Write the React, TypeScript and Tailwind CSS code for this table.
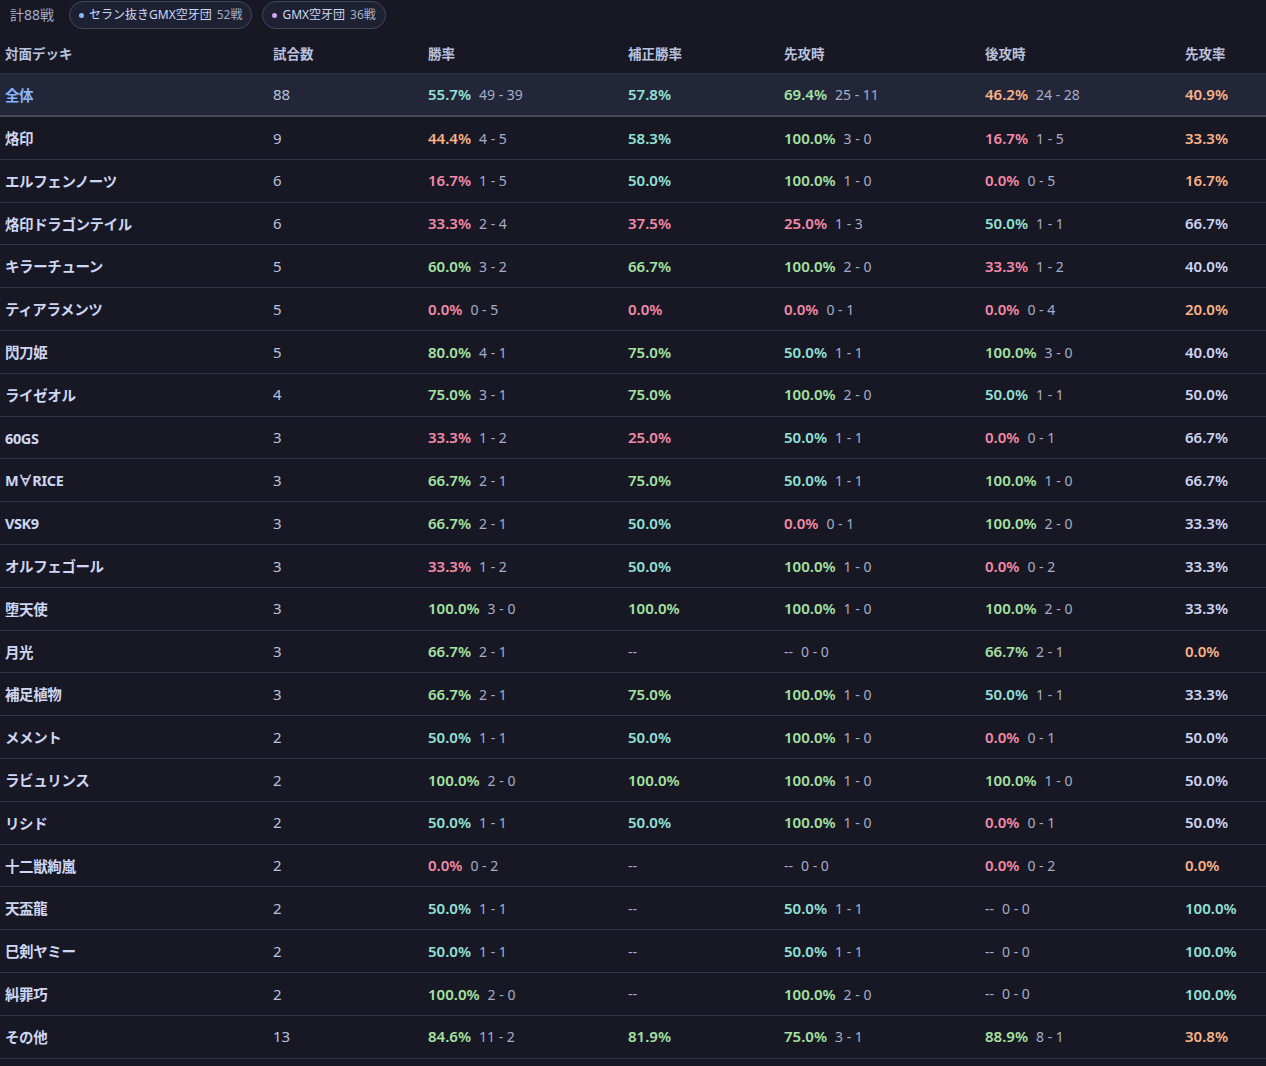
import clsx from 'clsx';

type Tone = 'green' | 'teal' | 'peach' | 'red' | 'plain';

type Row = {
  name: string;
  games: number;
  wr: number;
  rec: string;
  adj: number | null;
  first: number | null;
  firstRec: string;
  second: number | null;
  secondRec: string;
  firstRate: number;
  rateTone: Tone;
};

const total: Row = {
  name: '全体',
  games: 88,
  wr: 55.7,
  rec: '49 - 39',
  adj: 57.8,
  first: 69.4,
  firstRec: '25 - 11',
  second: 46.2,
  secondRec: '24 - 28',
  firstRate: 40.9,
  rateTone: 'peach',
};

const rows: Row[] = [
  { name: '烙印', games: 9, wr: 44.4, rec: '4 - 5', adj: 58.3, first: 100, firstRec: '3 - 0', second: 16.7, secondRec: '1 - 5', firstRate: 33.3, rateTone: 'peach' },
  { name: 'エルフェンノーツ', games: 6, wr: 16.7, rec: '1 - 5', adj: 50, first: 100, firstRec: '1 - 0', second: 0, secondRec: '0 - 5', firstRate: 16.7, rateTone: 'peach' },
  { name: '烙印ドラゴンテイル', games: 6, wr: 33.3, rec: '2 - 4', adj: 37.5, first: 25, firstRec: '1 - 3', second: 50, secondRec: '1 - 1', firstRate: 66.7, rateTone: 'plain' },
  { name: 'キラーチューン', games: 5, wr: 60, rec: '3 - 2', adj: 66.7, first: 100, firstRec: '2 - 0', second: 33.3, secondRec: '1 - 2', firstRate: 40, rateTone: 'plain' },
  { name: 'ティアラメンツ', games: 5, wr: 0, rec: '0 - 5', adj: 0, first: 0, firstRec: '0 - 1', second: 0, secondRec: '0 - 4', firstRate: 20, rateTone: 'peach' },
  { name: '閃刀姫', games: 5, wr: 80, rec: '4 - 1', adj: 75, first: 50, firstRec: '1 - 1', second: 100, secondRec: '3 - 0', firstRate: 40, rateTone: 'plain' },
  { name: 'ライゼオル', games: 4, wr: 75, rec: '3 - 1', adj: 75, first: 100, firstRec: '2 - 0', second: 50, secondRec: '1 - 1', firstRate: 50, rateTone: 'plain' },
  { name: '60GS', games: 3, wr: 33.3, rec: '1 - 2', adj: 25, first: 50, firstRec: '1 - 1', second: 0, secondRec: '0 - 1', firstRate: 66.7, rateTone: 'plain' },
  { name: 'M∀RICE', games: 3, wr: 66.7, rec: '2 - 1', adj: 75, first: 50, firstRec: '1 - 1', second: 100, secondRec: '1 - 0', firstRate: 66.7, rateTone: 'plain' },
  { name: 'VSK9', games: 3, wr: 66.7, rec: '2 - 1', adj: 50, first: 0, firstRec: '0 - 1', second: 100, secondRec: '2 - 0', firstRate: 33.3, rateTone: 'plain' },
  { name: 'オルフェゴール', games: 3, wr: 33.3, rec: '1 - 2', adj: 50, first: 100, firstRec: '1 - 0', second: 0, secondRec: '0 - 2', firstRate: 33.3, rateTone: 'plain' },
  { name: '堕天使', games: 3, wr: 100, rec: '3 - 0', adj: 100, first: 100, firstRec: '1 - 0', second: 100, secondRec: '2 - 0', firstRate: 33.3, rateTone: 'plain' },
  { name: '月光', games: 3, wr: 66.7, rec: '2 - 1', adj: null, first: null, firstRec: '0 - 0', second: 66.7, secondRec: '2 - 1', firstRate: 0, rateTone: 'peach' },
  { name: '補足植物', games: 3, wr: 66.7, rec: '2 - 1', adj: 75, first: 100, firstRec: '1 - 0', second: 50, secondRec: '1 - 1', firstRate: 33.3, rateTone: 'plain' },
  { name: 'メメント', games: 2, wr: 50, rec: '1 - 1', adj: 50, first: 100, firstRec: '1 - 0', second: 0, secondRec: '0 - 1', firstRate: 50, rateTone: 'plain' },
  { name: 'ラビュリンス', games: 2, wr: 100, rec: '2 - 0', adj: 100, first: 100, firstRec: '1 - 0', second: 100, secondRec: '1 - 0', firstRate: 50, rateTone: 'plain' },
  { name: 'リシド', games: 2, wr: 50, rec: '1 - 1', adj: 50, first: 100, firstRec: '1 - 0', second: 0, secondRec: '0 - 1', firstRate: 50, rateTone: 'plain' },
  { name: '十二獣絢嵐', games: 2, wr: 0, rec: '0 - 2', adj: null, first: null, firstRec: '0 - 0', second: 0, secondRec: '0 - 2', firstRate: 0, rateTone: 'peach' },
  { name: '天盃龍', games: 2, wr: 50, rec: '1 - 1', adj: null, first: 50, firstRec: '1 - 1', second: null, secondRec: '0 - 0', firstRate: 100, rateTone: 'teal' },
  { name: '巳剣ヤミー', games: 2, wr: 50, rec: '1 - 1', adj: null, first: 50, firstRec: '1 - 1', second: null, secondRec: '0 - 0', firstRate: 100, rateTone: 'teal' },
  { name: '糾罪巧', games: 2, wr: 100, rec: '2 - 0', adj: null, first: 100, firstRec: '2 - 0', second: null, secondRec: '0 - 0', firstRate: 100, rateTone: 'teal' },
  { name: 'その他', games: 13, wr: 84.6, rec: '11 - 2', adj: 81.9, first: 75, firstRec: '3 - 1', second: 88.9, secondRec: '8 - 1', firstRate: 30.8, rateTone: 'peach' },
];

const toneClass: Record<Tone, string> = {
  green: 'text-[#a6e3a1]',
  teal: 'text-[#94e2d5]',
  peach: 'text-[#fab387]',
  red: 'text-[#f38ba8]',
  plain: 'text-[#cdd6f4]',
};

// win rate colour bands
const rateTone = (v: number): Tone => {
  if (v >= 60) return 'green';
  if (v >= 50) return 'teal';
  if (v >= 40) return 'peach';
  return 'red';
};

const cols =
  'grid grid-cols-[268px_155px_200px_156px_201px_200px_1fr] [&>div]:px-[5px]';

function Pct({ value, tone }: { value: number | null; tone?: Tone }) {
  if (value === null) {
    return <span className="text-[#a6adc8]">--</span>;
  }
  return (
    <span className={clsx('text-[15px] font-semibold', toneClass[tone ?? rateTone(value)])}>
      {value.toFixed(1)}%
    </span>
  );
}

function WithRecord({ value, rec }: { value: number | null; rec: string }) {
  return (
    <div className="flex items-baseline gap-[8px]">
      <Pct value={value} />
      <span className="text-[14px] text-[#a6adc8]">{rec}</span>
    </div>
  );
}

function StatRow({ row, isTotal }: { row: Row; isTotal?: boolean }) {
  return (
    <div
      className={clsx(
        cols,
        'items-center',
        isTotal
          ? 'h-[43px] border-b-2 border-[#45475a] bg-[#222638] pt-[1px]'
          : 'h-[42.8px] border-b border-[#313244] pt-[1px]'
      )}
    >
      <div
        className={clsx(
          'font-bold text-[14.5px] tracking-[-0.4px]',
          isTotal ? 'text-[#89b4fa]' : 'text-[#cdd6f4]'
        )}
      >
        {row.name}
      </div>
      <div className="text-[15px] text-[#bac2de]">{row.games}</div>
      <div>
        <WithRecord value={row.wr} rec={row.rec} />
      </div>
      <div>
        <Pct value={row.adj} />
      </div>
      <div>
        <WithRecord value={row.first} rec={row.firstRec} />
      </div>
      <div>
        <WithRecord value={row.second} rec={row.secondRec} />
      </div>
      <div>
        <Pct value={row.firstRate} tone={row.rateTone} />
      </div>
    </div>
  );
}

export default function App() {
  return (
    <div
      className="min-h-screen w-[1266px] bg-[#181825] text-sm text-[#cdd6f4]"
      style={{ fontFamily: '"Noto Sans", "Noto Sans CJK JP", sans-serif' }}
    >
      <div className="flex h-[30px] items-center gap-[15px] pl-[10px]">
        <span className="text-[14px] text-[#a6adc8]">計88戦</span>
        <div className="flex gap-[10px]">
          <span className="flex h-[28px] items-center gap-[5px] rounded-full border border-[#45475a] bg-[#1e2132] px-[9px] text-[12px]">
            <span className="h-[5px] w-[5px] rounded-full bg-[#89b4fa]" />
            <span className="text-[#cdd6f4]">セラン抜きGMX空牙団</span>
            <span className="text-[#a6adc8]">52戦</span>
          </span>
          <span className="flex h-[28px] items-center gap-[5px] rounded-full border border-[#45475a] bg-[#1e2132] px-[9px] text-[12px]">
            <span className="h-[5px] w-[5px] rounded-full bg-[#cba6f7]" />
            <span className="text-[#cdd6f4]">GMX空牙団</span>
            <span className="text-[#a6adc8]">36戦</span>
          </span>
        </div>
      </div>

      <div className="mt-[6px]">
        <div
          className={clsx(
            cols,
            'h-[38px] items-center border-b border-[#313244] text-[13.5px] font-semibold text-[#bac2de]'
          )}
        >
          <div>対面デッキ</div>
          <div>試合数</div>
          <div>勝率</div>
          <div>補正勝率</div>
          <div>先攻時</div>
          <div>後攻時</div>
          <div>先攻率</div>
        </div>
        <StatRow row={total} isTotal />
        {rows.map((r) => (
          <StatRow key={r.name} row={r} />
        ))}
      </div>
    </div>
  );
}
